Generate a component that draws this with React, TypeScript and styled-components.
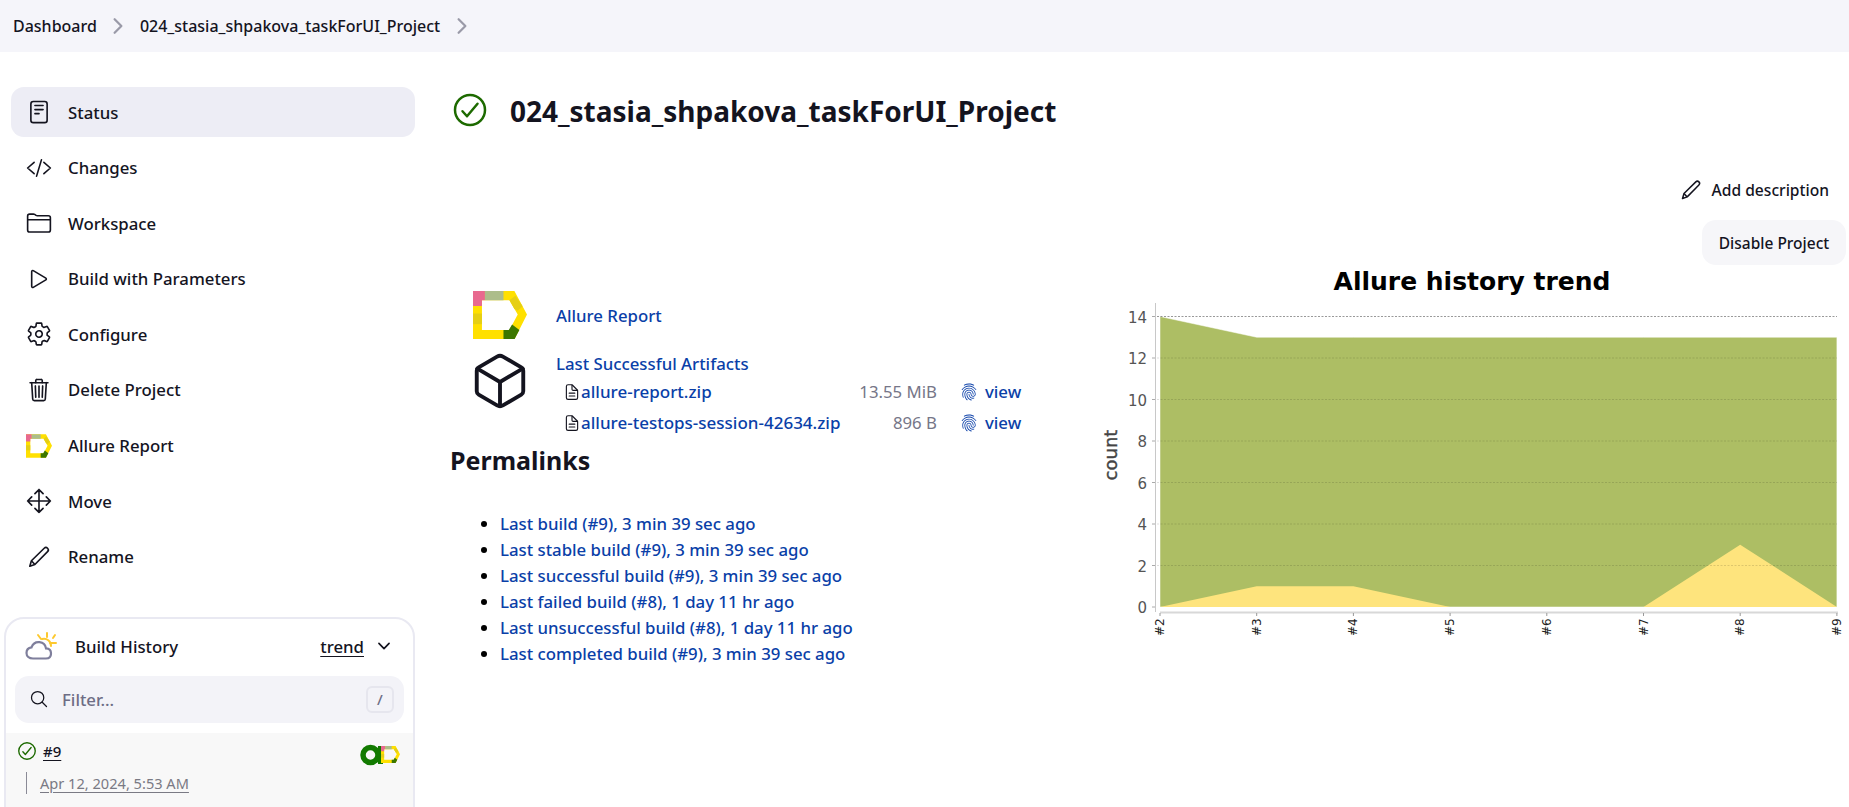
import styled, { createGlobalStyle } from "styled-components";
import {
  IoCheckmarkCircleOutline,
  IoChevronDown,
  IoChevronForward,
  IoCodeSlashOutline,
  IoCubeOutline,
  IoDocumentTextOutline,
  IoFingerPrintOutline,
  IoFolderOutline,
  IoMoveOutline,
  IoPlayOutline,
  IoReaderOutline,
  IoSearchOutline,
  IoSettingsOutline,
  IoTrashOutline,
} from "react-icons/io5";

const GlobalStyle = createGlobalStyle`
  html, body {
    margin: 0;
    height: 807px;
    overflow: hidden;
    background: #fff;
    color: #14141f;
    font-family: "Noto Sans", "Open Sans", sans-serif;
  }
`;

const TopBar = styled.nav`
  height: 52px;
  background: #f5f5fa;
  display: flex;
  align-items: center;
  padding-left: 13px;
  font-size: 16px;
  font-weight: 500;
`;

const Crumb = styled.span`
  color: #14141f;
`;

const CrumbSep = styled.span`
  display: flex;
  margin: 0 9.5px;
  color: #9a9aa8;
  font-size: 24px;
`;

const Layout = styled.div`
  display: flex;
  height: 755px;
  overflow: hidden;
`;

const Sidebar = styled.aside`
  width: 415px;
  flex: none;
  padding-top: 35px;
  box-sizing: border-box;
`;

const Nav = styled.div`
  display: flex;
  flex-direction: column;
  gap: 5.6px;
  margin-left: 11px;
`;

const NavItem = styled.div<{ $active?: boolean }>`
  height: 50px;
  display: flex;
  align-items: center;
  gap: 16px;
  padding-left: 15px;
  border-radius: 13px;
  font-size: 16.8px;
  font-weight: 500;
  background: ${(p) => (p.$active ? "#ededf5" : "transparent")};
  svg {
    width: 26px;
    height: 26px;
    flex: none;
  }
`;

const HistoryCard = styled.section`
  margin: 35px 0 0 4px;
  width: 411px;
  box-sizing: border-box;
  height: 260px;
  border: 2px solid #e9e9f2;
  border-radius: 20px;
  overflow: hidden;
`;

const HistoryHeader = styled.div`
  height: 57px;
  display: flex;
  align-items: center;
  padding: 0 20px 2px 19px;
  box-sizing: border-box;
  font-size: 16.8px;
  font-weight: 500;
`;

const HistoryTitle = styled.span`
  margin-left: 18px;
  flex: 1;
`;

const TrendLink = styled.span`
  text-decoration: underline;
  text-underline-offset: 3px;
  margin-right: 11px;
`;

const FilterBox = styled.div`
  height: 47px;
  margin: 0 9px;
  border-radius: 14px;
  background: #f3f3f8;
  display: flex;
  align-items: center;
  padding: 0 10px 0 14px;
  gap: 13px;
  svg {
    width: 20px;
    height: 20px;
    flex: none;
  }
`;

const FilterInput = styled.input`
  flex: 1;
  min-width: 0;
  border: 0;
  background: transparent;
  outline: none;
  font: 500 16.8px "Noto Sans", sans-serif;
  padding: 0;
  &::placeholder {
    color: #6d6d85;
    opacity: 1;
  }
`;

const SlashKey = styled.kbd`
  width: 28px;
  height: 27px;
  box-sizing: border-box;
  border: 2px solid #e6e6ee;
  border-radius: 6px;
  display: flex;
  align-items: center;
  justify-content: center;
  font: 500 15px "Noto Sans", sans-serif;
  color: #6d6d85;
`;

const BuildRow = styled.div`
  margin-top: 10px;
  height: 100px;
  background: #f8f8f8;
  padding: 7px 13px 0 10px;
`;

const BuildTop = styled.div`
  display: flex;
  align-items: center;
  gap: 5px;
  height: 22px;
  font-size: 15px;
  font-weight: 500;
  svg.status {
    width: 22px;
    height: 22px;
    color: #1d6a00;
  }
  svg.badge {
    margin-top: 9px;
  }
`;

const BuildNumber = styled.span`
  flex: 1;
  span {
    text-decoration: underline;
    text-underline-offset: 3px;
  }
`;

const BuildDate = styled.div`
  margin: 10px 0 0 10px;
  height: 22px;
  line-height: 22px;
  border-left: 1px solid #8a8a96;
  padding-left: 13px;
  font-size: 14.6px;
  color: #7a7a84;
  span {
    text-decoration: underline;
    text-underline-offset: 3px;
  }
`;

const Main = styled.main`
  flex: 1;
  min-width: 0;
  padding: 33px 3px 0 35px;
  box-sizing: border-box;
`;

const TitleRow = styled.div`
  height: 50px;
  display: flex;
  align-items: center;
  gap: 20px;
  svg {
    width: 40px;
    height: 40px;
    color: #1d6a00;
    flex: none;
  }
`;

const Title = styled.h1`
  margin: 2px 0 0;
  font-size: 28px;
  font-weight: 700;
  line-height: 36px;
`;

const Actions = styled.div`
  display: flex;
  flex-direction: column;
  align-items: flex-end;
  margin-top: 35px;
  gap: 10px;
`;

const ActionLink = styled.div`
  height: 40px;
  display: flex;
  align-items: center;
  gap: 9px;
  padding-right: 17px;
  font-size: 15.6px;
  font-weight: 500;
  svg {
    width: 24px;
    height: 24px;
  }
`;

const ActionButton = styled.button`
  height: 45px;
  width: 144px;
  border: 0;
  border-radius: 14px;
  background: #f6f6f9;
  color: #14141f;
  font: 500 15.5px "Noto Sans", sans-serif;
  padding: 0;
`;

const Columns = styled.div`
  display: flex;
  justify-content: space-between;
  margin-right: -3px;
`;

const LeftColumn = styled.div`
  width: 620px;
  padding-top: 26px;
`;

const LinkRow = styled.div`
  display: flex;
  align-items: center;
  height: 48px;
  font-size: 16.8px;
  font-weight: 500;
  color: #0a3fa8;
`;

const LinkLabel = styled.span`
  margin-top: 1px;
`;

const IconCell = styled.div`
  width: 106px;
  flex: none;
  padding-left: 23px;
  box-sizing: border-box;
  display: flex;
  svg.cube {
    width: 62px;
    height: 62px;
    margin: -2px 0 0 -4px;
    color: #14141f;
  }
`;

const ArtifactRow = styled.div`
  display: flex;
  margin-top: 13px;
`;

const ArtifactList = styled.div`
  flex: 1;
  font-size: 16.8px;
  font-weight: 500;
  color: #0a3fa8;
`;

const ArtifactHead = styled.div`
  height: 24px;
  line-height: 24px;
`;

const ArtifactFile = styled.div`
  height: 31px;
  display: grid;
  grid-template-columns: 18px 1fr auto 41px 44px;
  align-items: center;
  padding-left: 7px;
  width: 466px;
  box-sizing: border-box;
  white-space: nowrap;
  svg.file {
    width: 18px;
    height: 18px;
    color: #14141f;
  }
  svg.print {
    width: 18px;
    height: 18px;
    margin-left: 23px;
  }
`;

const FileName = styled.span`
  font-size: 17px;
`;

const FileSize = styled.span`
  color: #767688;
  font-weight: 400;
`;

const ViewLabel = styled.span`
  margin-left: 7px;
`;

const SectionTitle = styled.h2`
  margin: 5px 0 0;
  font-size: 25px;
  line-height: 34px;
  font-weight: 700;
`;

const Permalinks = styled.ul`
  margin: 34px 0 0;
  padding-left: 50px;
  font-size: 16.8px;
  font-weight: 500;
  color: #0a3fa8;
  li {
    height: 26px;
    line-height: 26px;
  }
  li::marker {
    color: #000;
  }
`;

const ChartSvg = styled.svg`
  width: 761px;
  height: 382px;
  flex: none;
`;

const PencilIcon = () => (
  <svg viewBox="0 0 24 24" fill="none" stroke="currentColor" strokeWidth="1.5" strokeLinejoin="round">
    <path d="M3.5 20.5L5 15.5L16.8 3.9C17.7 3 19 3 19.9 3.9C20.8 4.8 20.8 6.1 19.9 7L8.2 18.9Z" />
    <path d="M5 15.5L8.2 18.9" />
  </svg>
);

const AllureLogo = ({ size }: { size: number }) => (
  <svg viewBox="0 0 163 146" width={size} height={(size * 146) / 163}>
    <path
      fillRule="evenodd"
      fill="#ffe000"
      d="M0 0H125L163 71L125 146H0ZM27 28V118H110L135 71L110 28Z"
    />
    <path fill="#e8698f" d="M0 0H36V28H27V45H0Z" />
    <path fill="#acbd8a" d="M36 0H92V28H36Z" />
    <rect fill="#e6cf14" x="0" y="68" width="27" height="32" />
    <path fill="#e6cf14" d="M110 28L128 14L150 46L135 60L125 54Z" />
    <path fill="#3c7700" d="M92 146H125L140 118L118 101L108 118H92Z" />
  </svg>
);

const WeatherIcon = () => (
  <svg width="32" height="28" viewBox="0 0 32 28" fill="none">
    <g stroke="#fdc92f" strokeWidth="2" strokeLinecap="round">
      <path d="M16 7L13 3M22 5V1M28 6L30 3M25 11H31" />
      <path d="M17 7a7 7 0 0 1 9 7" />
    </g>
    <path
      fill="#fff"
      stroke="#7f7f9c"
      strokeWidth="2.2"
      d="M8 26.5C4 26.5 1.5 24 1.5 21C1.5 18 3.5 15.8 6.5 15.4C8 11.5 11 9.8 14.5 10.2C18 10.6 20.5 13 21 16.4C24 16.5 26 18.5 26 21.5C26 24.5 24 26.5 21 26.5Z"
    />
  </svg>
);

const BuildBadge = () => (
  <svg className="badge" width="40" height="22" viewBox="0 0 40 22">
    <circle cx="10.5" cy="11" r="7.5" fill="none" stroke="#127a00" strokeWidth="5.5" />
    <rect x="18" y="2" width="5" height="18" fill="#127a00" />
    <g transform="translate(21 2)">
      <AllureLogo size={19} />
    </g>
  </svg>
);

const values = [
  { total: 14, broken: 0 },
  { total: 13, broken: 1 },
  { total: 13, broken: 1 },
  { total: 13, broken: 0 },
  { total: 13, broken: 0 },
  { total: 13, broken: 0 },
  { total: 13, broken: 3 },
  { total: 13, broken: 0 },
];

const xAt = (i: number) => 1160 + 96.7 * i;
const yAt = (v: number) => 607 - v * 20.75;

const HistoryChart = () => {
  const base = `L${xAt(7)} ${yAt(0)}L${xAt(0)} ${yAt(0)}Z`;
  const topLine = values.map((v, i) => `${i ? "L" : "M"}${xAt(i)} ${yAt(v.total)}`).join("");
  const brokenLine = values.map((v, i) => `${i ? "L" : "M"}${xAt(i)} ${yAt(v.broken)}`).join("");
  return (
    <ChartSvg viewBox="1088 265 761 382">
      <text
        x="1472"
        y="290"
        textAnchor="middle"
        fontFamily="DejaVu Sans"
        fontWeight="700"
        fontSize="25"
        fill="#000"
      >
        Allure history trend
      </text>
      <path d={topLine + base} fill="#adbe64" stroke="#fff" strokeOpacity="0.5" />
      <path d={brokenLine + base} fill="#fee47d" />
      {[0, 2, 4, 6, 8, 10, 12, 14].map((v) => (
        <g key={v}>
          {v > 0 && (
            <line
              x1="1157"
              x2="1837"
              y1={yAt(v)}
              y2={yAt(v)}
              stroke="#000"
              strokeOpacity={v === 14 ? 0.4 : 0.13}
              strokeDasharray="2 1.5"
            />
          )}
          <line x1="1152" x2="1155" y1={yAt(v)} y2={yAt(v)} stroke="#aaa" />
          <text
            x="1147"
            y={yAt(v) + 6}
            textAnchor="end"
            fontFamily="DejaVu Sans"
            fontSize="15"
            fill="#555"
          >
            {v}
          </text>
        </g>
      ))}
      <line x1="1155.5" x2="1155.5" y1="303" y2="612" stroke="#c8c8c8" />
      <line x1="1160" x2="1838" y1="612.5" y2="612.5" stroke="#d8d8d8" strokeWidth="2" />
      <text
        transform="translate(1117 455) rotate(-90)"
        textAnchor="middle"
        fontFamily="DejaVu Sans"
        fontSize="18"
        stroke="#444"
        strokeWidth="0.4"
        fill="#444"
      >
        count
      </text>
      {values.map((_, i) => (
        <g key={i}>
          <line x1={xAt(i)} x2={xAt(i)} y1="613" y2="616" stroke="#999" />
          <text
            transform={`translate(${xAt(i) + 4} 636) rotate(-90)`}
            fontFamily="DejaVu Sans"
            fontSize="12"
            fill="#222"
          >
            #{i + 2}
          </text>
        </g>
      ))}
    </ChartSvg>
  );
};

const navItems = [
  { label: "Status", icon: <IoReaderOutline /> },
  { label: "Changes", icon: <IoCodeSlashOutline /> },
  { label: "Workspace", icon: <IoFolderOutline /> },
  { label: "Build with Parameters", icon: <IoPlayOutline /> },
  { label: "Configure", icon: <IoSettingsOutline /> },
  { label: "Delete Project", icon: <IoTrashOutline /> },
  { label: "Allure Report", icon: <AllureLogo size={26} /> },
  { label: "Move", icon: <IoMoveOutline /> },
  { label: "Rename", icon: <PencilIcon /> },
];

const artifacts = [
  { name: "allure-report.zip", size: "13.55 MiB" },
  { name: "allure-testops-session-42634.zip", size: "896 B" },
];

const permalinks = [
  "Last build (#9), 3 min 39 sec ago",
  "Last stable build (#9), 3 min 39 sec ago",
  "Last successful build (#9), 3 min 39 sec ago",
  "Last failed build (#8), 1 day 11 hr ago",
  "Last unsuccessful build (#8), 1 day 11 hr ago",
  "Last completed build (#9), 3 min 39 sec ago",
];

const App = () => {
  return (
    <>
      <GlobalStyle />
      <TopBar>
        <Crumb>Dashboard</Crumb>
        <CrumbSep>
          <IoChevronForward />
        </CrumbSep>
        <Crumb>024_stasia_shpakova_taskForUI_Project</Crumb>
        <CrumbSep>
          <IoChevronForward />
        </CrumbSep>
      </TopBar>
      <Layout>
        <Sidebar>
          <Nav>
            {navItems.map((item, i) => (
              <NavItem key={item.label} $active={i === 0}>
                {item.icon}
                {item.label}
              </NavItem>
            ))}
          </Nav>
          <HistoryCard>
            <HistoryHeader>
              <WeatherIcon />
              <HistoryTitle>Build History</HistoryTitle>
              <TrendLink>trend</TrendLink>
              <IoChevronDown size={18} />
            </HistoryHeader>
            <FilterBox>
              <IoSearchOutline />
              <FilterInput placeholder="Filter..." />
              <SlashKey>/</SlashKey>
            </FilterBox>
            <BuildRow>
              <BuildTop>
                <IoCheckmarkCircleOutline className="status" />
                <BuildNumber>
                  <span>#9</span>
                </BuildNumber>
                <BuildBadge />
              </BuildTop>
              <BuildDate>
                <span>Apr 12, 2024, 5:53 AM</span>
              </BuildDate>
            </BuildRow>
          </HistoryCard>
        </Sidebar>
        <Main>
          <TitleRow>
            <IoCheckmarkCircleOutline />
            <Title>024_stasia_shpakova_taskForUI_Project</Title>
          </TitleRow>
          <Actions>
            <ActionLink>
              <PencilIcon />
              Add description
            </ActionLink>
            <ActionButton>Disable Project</ActionButton>
          </Actions>
          <Columns>
            <LeftColumn>
              <LinkRow>
                <IconCell>
                  <AllureLogo size={54} />
                </IconCell>
                <LinkLabel>Allure Report</LinkLabel>
              </LinkRow>
              <ArtifactRow>
                <IconCell>
                  <IoCubeOutline className="cube" />
                </IconCell>
                <ArtifactList>
                  <ArtifactHead>Last Successful Artifacts</ArtifactHead>
                  {artifacts.map((file) => (
                    <ArtifactFile key={file.name}>
                      <IoDocumentTextOutline className="file" />
                      <FileName>{file.name}</FileName>
                      <FileSize>{file.size}</FileSize>
                      <IoFingerPrintOutline className="print" />
                      <ViewLabel>view</ViewLabel>
                    </ArtifactFile>
                  ))}
                </ArtifactList>
              </ArtifactRow>
              <SectionTitle>Permalinks</SectionTitle>
              <Permalinks>
                {permalinks.map((text) => (
                  <li key={text}>{text}</li>
                ))}
              </Permalinks>
            </LeftColumn>
            <HistoryChart />
          </Columns>
        </Main>
      </Layout>
    </>
  );
};

export default App;
